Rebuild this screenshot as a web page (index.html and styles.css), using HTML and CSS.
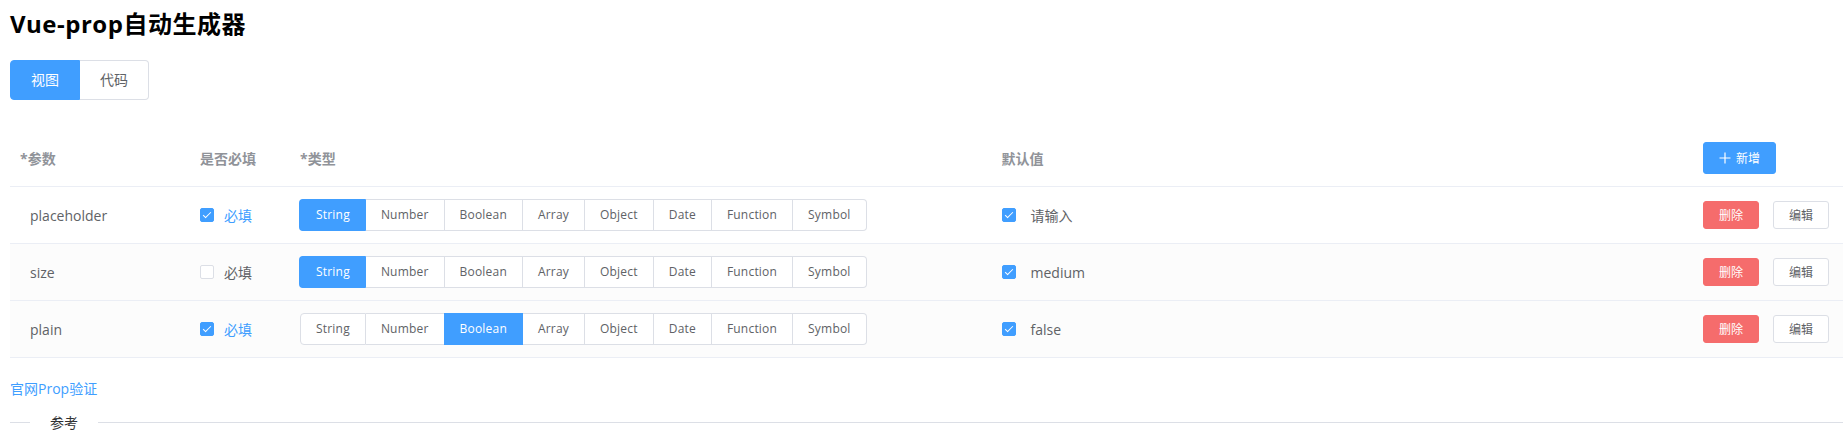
FILE: index.html
```html
<!DOCTYPE html>
<html lang="zh-CN">
<head>
<meta charset="utf-8">
<title>Vue-prop自动生成器</title>
<link rel="stylesheet" href="styles.css">
</head>
<body>
<div class="page">
  <h2 class="title">Vue-prop自动生成器</h2>

  <div class="tabs">
    <span class="tab active">视图</span><span class="tab">代码</span>
  </div>

  <div class="table">
    <div class="row head">
      <div class="cell">*参数</div>
      <div class="cell">是否必填</div>
      <div class="cell">*类型</div>
      <div class="cell">默认值</div>
      <div class="cell">
        <button class="btn btn-primary btn-small">
          <svg class="plus" width="12" height="12" viewBox="0 0 12 12"><path d="M6 0.5V11.5M0.5 6H11.5" stroke="#fff" stroke-width="1.2" fill="none"/></svg><span>新增</span>
        </button>
      </div>
    </div>

    <div class="row">
      <div class="cell name">placeholder</div>
      <div class="cell"><span class="checkbox checked"></span><span class="cb-label on">必填</span></div>
      <div class="cell">
        <div class="group">
          <span class="rb active">String</span><span class="rb">Number</span><span class="rb">Boolean</span><span class="rb">Array</span><span class="rb">Object</span><span class="rb">Date</span><span class="rb">Function</span><span class="rb">Symbol</span>
        </div>
      </div>
      <div class="cell"><span class="checkbox checked"></span><span class="default">请输入</span></div>
      <div class="cell actions"><button class="btn btn-danger btn-mini">删除</button><button class="btn btn-plain btn-mini">编辑</button></div>
    </div>

    <div class="row shade">
      <div class="cell name">size</div>
      <div class="cell"><span class="checkbox"></span><span class="cb-label">必填</span></div>
      <div class="cell">
        <div class="group">
          <span class="rb active">String</span><span class="rb">Number</span><span class="rb">Boolean</span><span class="rb">Array</span><span class="rb">Object</span><span class="rb">Date</span><span class="rb">Function</span><span class="rb">Symbol</span>
        </div>
      </div>
      <div class="cell"><span class="checkbox checked"></span><span class="default">medium</span></div>
      <div class="cell actions"><button class="btn btn-danger btn-mini">删除</button><button class="btn btn-plain btn-mini">编辑</button></div>
    </div>

    <div class="row shade">
      <div class="cell name">plain</div>
      <div class="cell"><span class="checkbox checked"></span><span class="cb-label on">必填</span></div>
      <div class="cell">
        <div class="group">
          <span class="rb">String</span><span class="rb">Number</span><span class="rb active">Boolean</span><span class="rb">Array</span><span class="rb">Object</span><span class="rb">Date</span><span class="rb">Function</span><span class="rb">Symbol</span>
        </div>
      </div>
      <div class="cell"><span class="checkbox checked"></span><span class="default">false</span></div>
      <div class="cell actions"><button class="btn btn-danger btn-mini">删除</button><button class="btn btn-plain btn-mini">编辑</button></div>
    </div>
  </div>

  <a class="link">官网Prop验证</a>

  <div class="divider"><span class="divider-text">参考</span></div>
</div>
</body>
</html>
```

FILE: styles.css
```css
html {
  overflow: hidden;
}

html, body {
  margin: 0;
  padding: 0;
  background: #fff;
}

body {
  font-family: "Open Sans", "Noto Sans CJK SC", sans-serif;
  color: #606266;
  font-size: 14px;
}

.page {
  padding: 8px 0 10px 10px;
}

.title {
  margin: 0;
  font-size: 24px;
  line-height: 32px;
  font-weight: 700;
  letter-spacing: 0.5px;
  color: #000;
}

.tabs {
  margin-top: 20px;
  display: flex;
}

.tab {
  display: inline-block;
  box-sizing: border-box;
  height: 40px;
  padding: 0 20px;
  line-height: 38px;
  font-size: 14px;
  color: #606266;
  border: 1px solid #dcdfe6;
  border-left: 0;
  background: #fff;
}

.tab:first-child {
  border-left: 1px solid #dcdfe6;
  border-radius: 4px 0 0 4px;
}

.tab:last-child {
  border-radius: 0 4px 4px 0;
}

.tab.active {
  background: #409eff;
  border-color: #409eff;
  color: #fff;
}

.table {
  margin-top: 30px;
}

.row {
  display: grid;
  grid-template-columns: 180px 100px 1fr 1fr 150px;
  height: 57px;
  box-sizing: border-box;
  border-bottom: 1px solid #ebeef5;
  background: #fff;
}

.row.shade {
  background: #fcfcfc;
}

.cell {
  display: flex;
  align-items: center;
  padding: 0 10px;
  min-width: 0;
}

.head .cell {
  color: #909399;
  font-weight: 700;
  font-size: 14px;
}

.cell.name {
  padding-left: 20px;
  font-size: 14px;
}

.checkbox {
  position: relative;
  display: inline-block;
  box-sizing: border-box;
  width: 14px;
  height: 14px;
  border: 1px solid #dcdfe6;
  border-radius: 2px;
  background: #fff;
  flex: none;
}

.checkbox.checked {
  background: #409eff;
  border-color: #409eff;
}

.checkbox.checked::after {
  content: "";
  position: absolute;
  box-sizing: content-box;
  left: 4px;
  top: 1px;
  width: 3px;
  height: 7px;
  border: 1px solid #fff;
  border-left: 0;
  border-top: 0;
  transform: rotate(45deg);
}

.cb-label {
  padding-left: 10px;
  font-size: 14px;
  color: #606266;
}

.cb-label.on {
  color: #409eff;
}

.default {
  margin-left: 15px;
  font-size: 14px;
  color: #606266;
}

.group {
  display: flex;
}

.rb {
  display: inline-block;
  box-sizing: border-box;
  height: 32px;
  padding: 0 15px;
  line-height: 30px;
  font-size: 12px;
  letter-spacing: 0.2px;
  color: #606266;
  background: #fff;
  border: 1px solid #dcdfe6;
  border-left: 0;
  white-space: nowrap;
}

.rb:first-child {
  border-left: 1px solid #dcdfe6;
  border-radius: 4px 0 0 4px;
}

.rb:last-child {
  border-radius: 0 4px 4px 0;
}

.rb.active {
  background: #409eff;
  border-color: #409eff;
  color: #fff;
  box-shadow: -1px 0 0 0 #409eff;
}

.btn {
  display: inline-flex;
  align-items: center;
  justify-content: center;
  box-sizing: border-box;
  font-family: inherit;
  font-size: 12px;
  border-radius: 3px;
  border: 1px solid #dcdfe6;
  background: #fff;
  color: #606266;
  cursor: pointer;
  white-space: nowrap;
}

.btn-small {
  height: 32px;
  padding: 0 15px;
}

.btn-mini {
  height: 28px;
  padding: 0 15px;
}

.btn-primary {
  background: #409eff;
  border-color: #409eff;
  color: #fff;
}

.btn-danger {
  background: #f56c6c;
  border-color: #f56c6c;
  color: #fff;
}

.plus {
  margin-right: 5px;
}

.actions {
  gap: 14px;
}

.link {
  display: block;
  margin-top: 21px;
  font-size: 14px;
  line-height: 20px;
  color: #409eff;
  cursor: pointer;
}

.divider {
  position: relative;
  height: 1px;
  margin: 23px 0 0;
  background: #dcdfe6;
}

.divider-text {
  position: absolute;
  left: 20px;
  top: 50%;
  transform: translateY(-50%);
  padding: 0 20px;
  background: #fff;
  font-size: 14px;
  color: #303133;
  line-height: 20px;
}
```
